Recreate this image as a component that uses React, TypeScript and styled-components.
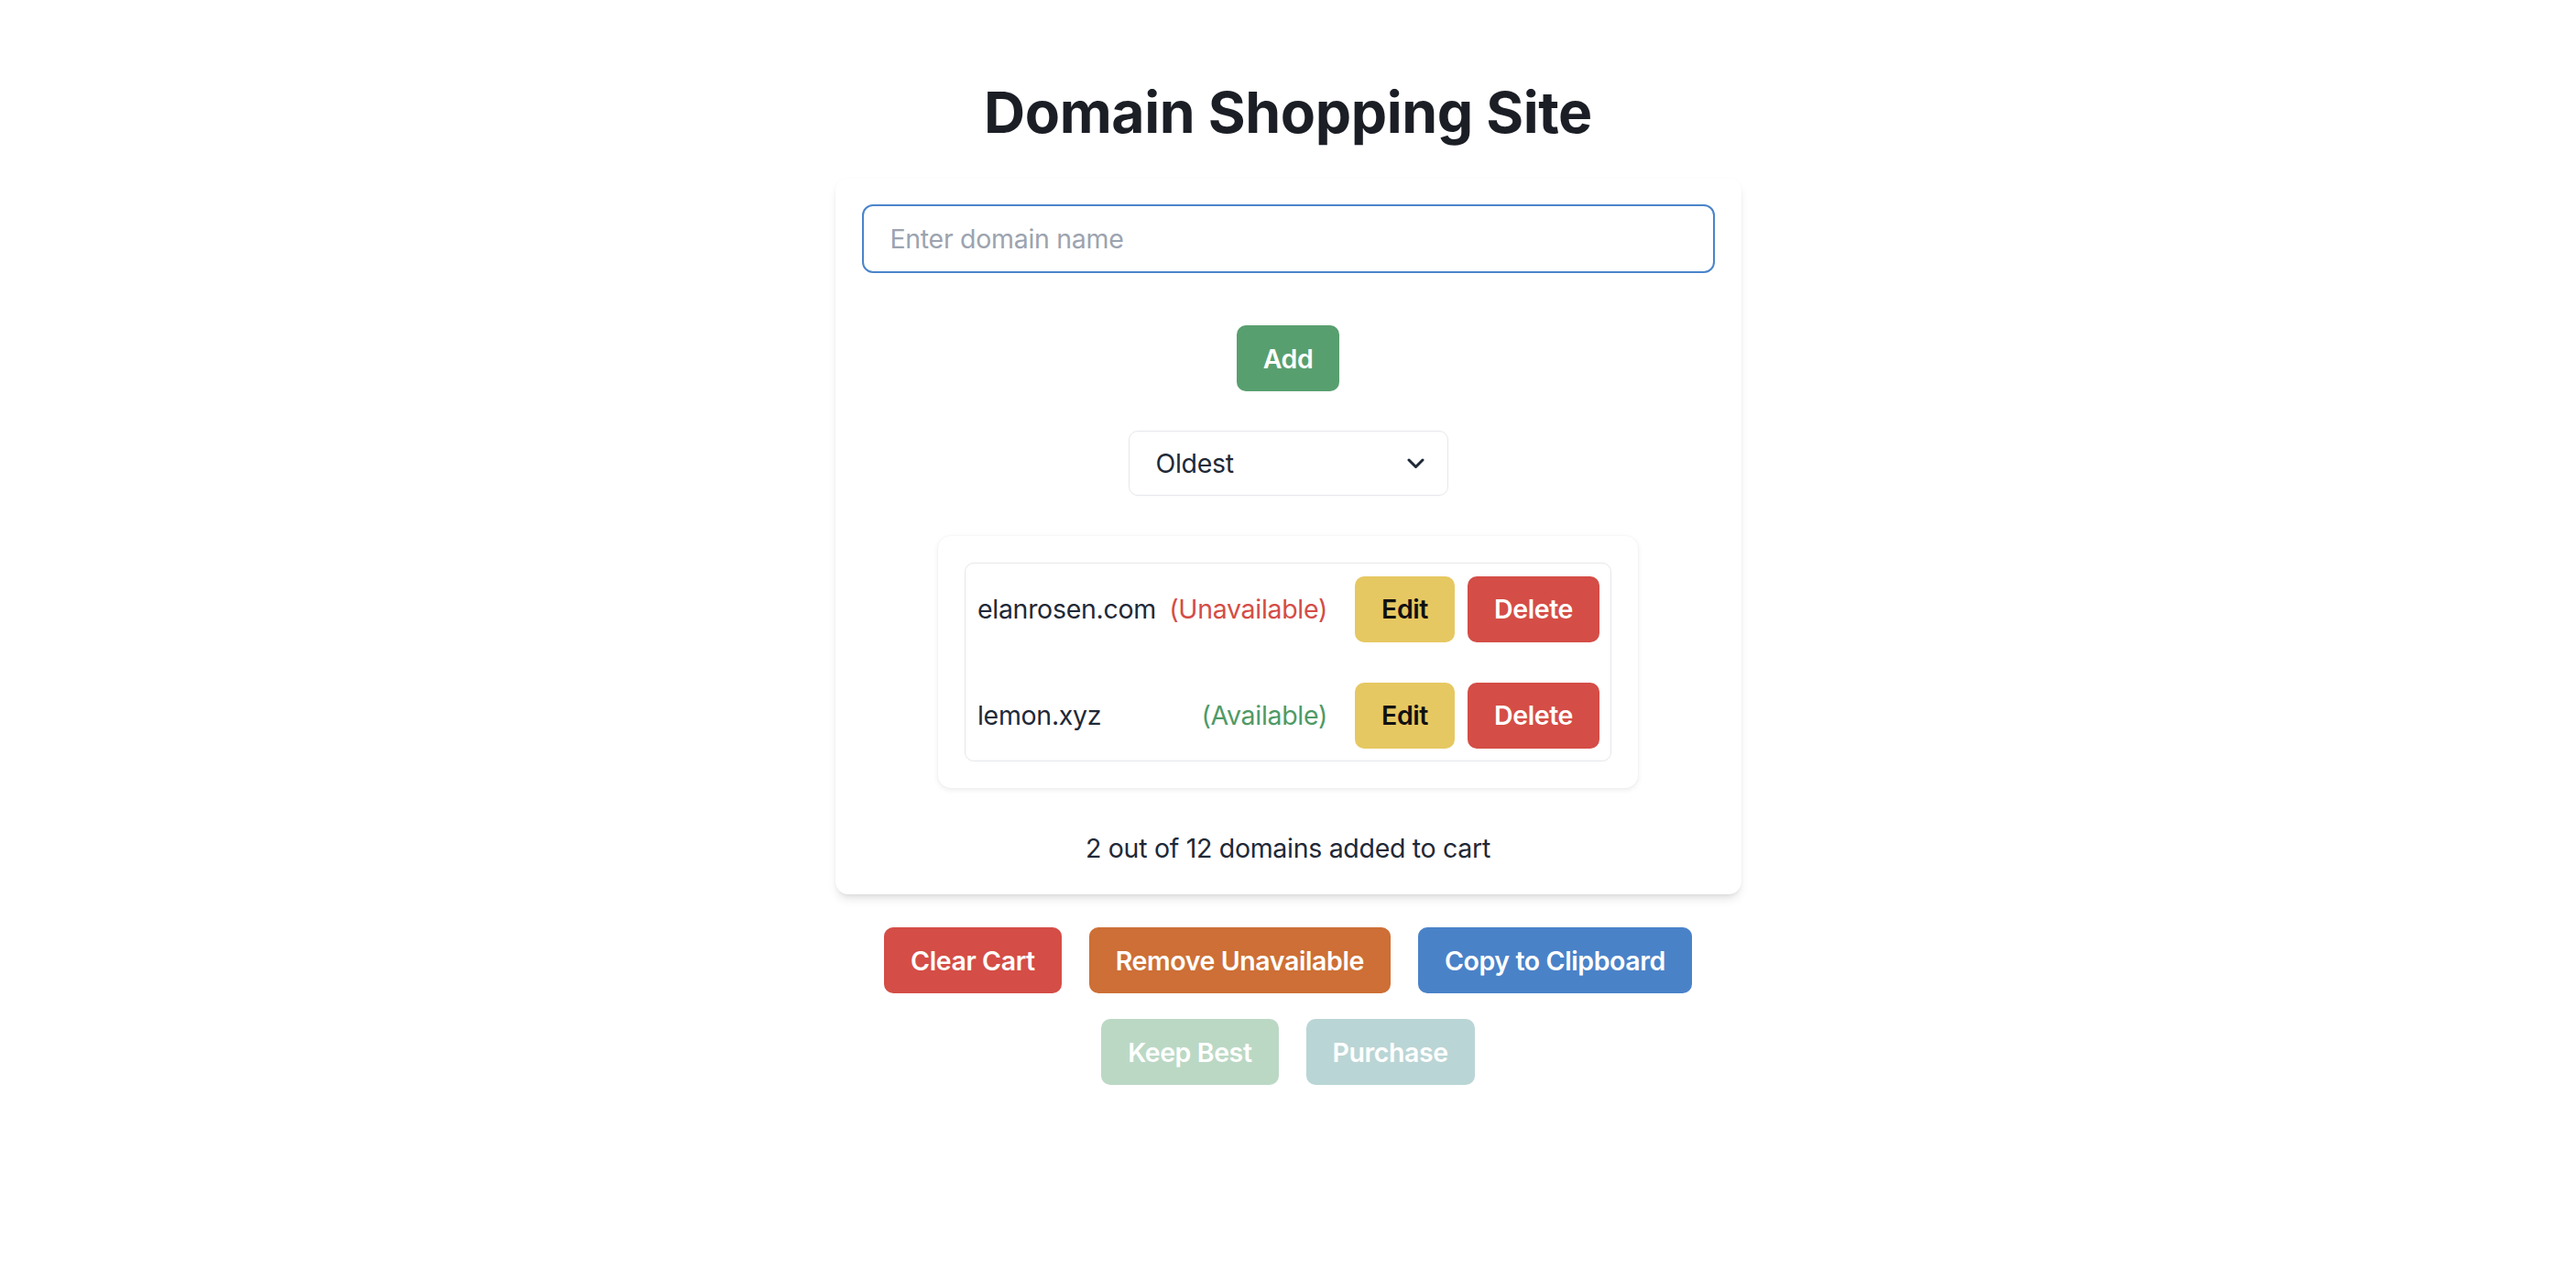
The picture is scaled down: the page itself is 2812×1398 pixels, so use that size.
import React, { useState } from "react";
import styled, { createGlobalStyle, css } from "styled-components";

const GlobalStyle = createGlobalStyle`
  html, body {
    margin: 0;
    padding: 0;
    background: #ffffff;
    font-family: Inter, "Noto Sans", "Liberation Sans", sans-serif;
    color: #1f2937;
  }
  * { box-sizing: border-box; }
`;

const Page = styled.main`
  display: flex;
  flex-direction: column;
  align-items: center;
  padding-top: 86px;
  padding-bottom: 80px;
`;

const Title = styled.h1`
  margin: 0 0 36px;
  font-size: 62.5px;
  line-height: 72px;
  font-weight: 700;
  color: #1b1e25;
  letter-spacing: -0.4px;
`;

const Card = styled.section`
  width: 989px;
  padding: 29px;
  background: #ffffff;
  border-radius: 14px;
  box-shadow: 0 7px 11px -2px rgba(0, 0, 0, 0.1), 0 4px 7px -4px rgba(0, 0, 0, 0.1),
    0 0 2px rgba(0, 0, 0, 0.04);
  display: flex;
  flex-direction: column;
  align-items: center;
`;

const DomainInput = styled.input`
  width: 100%;
  height: 75px;
  border: 2.5px solid #4a84ca;
  border-radius: 12px;
  padding: 0 29px;
  font-family: inherit;
  font-size: 28.5px;
  letter-spacing: -0.3px;
  color: #1f2937;
  outline: none;
  background: #fff;
  &::placeholder {
    color: #9ca3af;
  }
`;

type Tone = "green" | "yellow" | "red" | "orange" | "blue" | "teal";

const toneColors: Record<Tone, { bg: string; fg: string }> = {
  green: { bg: "#589f6f", fg: "#ffffff" },
  yellow: { bg: "#e6c862", fg: "#111111" },
  red: { bg: "#d44d46", fg: "#ffffff" },
  orange: { bg: "#cd6f36", fg: "#ffffff" },
  blue: { bg: "#4a82c8", fg: "#ffffff" },
  teal: { bg: "#559898", fg: "#ffffff" },
};

const Button = styled.button<{ $tone: Tone; $faded?: boolean }>`
  flex-shrink: 0;
  height: 72px;
  padding: 0 29px;
  border: none;
  border-radius: 10px;
  font-family: inherit;
  font-size: 28.5px;
  font-weight: 600;
  letter-spacing: -0.4px;
  line-height: 43px;
  cursor: pointer;
  white-space: nowrap;
  ${({ $tone }) => css`
    background: ${toneColors[$tone].bg};
    color: ${toneColors[$tone].fg};
  `}
  ${({ $faded }) =>
    $faded &&
    css`
      opacity: 0.4;
      cursor: not-allowed;
    `}
`;

const AddButton = styled(Button)`
  margin-top: 57px;
`;

const SelectWrap = styled.div`
  position: relative;
  margin-top: 43px;
  width: 349px;
  height: 71px;
`;

const SortSelect = styled.select`
  appearance: none;
  -webkit-appearance: none;
  width: 100%;
  height: 100%;
  border: 1.8px solid #e5e7eb;
  border-radius: 10px;
  background: #ffffff;
  padding: 0 60px 0 29px;
  font-family: inherit;
  font-size: 28.5px;
  letter-spacing: -0.3px;
  color: #1f2937;
  outline: none;
`;

const Chevron = styled.svg`
  position: absolute;
  right: 26px;
  top: 50%;
  width: 19px;
  height: 12px;
  transform: translateY(-50%);
  pointer-events: none;
`;

const ListCard = styled.div`
  margin-top: 44px;
  width: 764px;
  padding: 29px;
  border-radius: 14px;
  background: #fff;
  box-shadow: 0 2px 6px rgba(0, 0, 0, 0.08), 0 0 2px rgba(0, 0, 0, 0.05);
`;

const DomainList = styled.ul`
  list-style: none;
  margin: 0;
  padding: 0;
  border: 1.8px solid #e5e7eb;
  border-radius: 10px;
  display: flex;
  flex-direction: column;
  gap: 17px;
`;

const DomainRow = styled.li`
  display: flex;
  align-items: center;
  padding: 13.5px 12px 13.5px 13px;
`;

const DomainName = styled.span`
  flex: 1 1 0;
  min-width: 0;
  white-space: nowrap;
  font-size: 28.5px;
  letter-spacing: -0.3px;
  color: #1f2937;
`;

const Status = styled.span<{ $available: boolean }>`
  flex-shrink: 0;
  margin: 0 30px 0 16px;
  font-size: 28.5px;
  letter-spacing: -0.3px;
  white-space: nowrap;
  color: ${({ $available }) => ($available ? "#4f9a66" : "#d44d46")};
`;

const RowActions = styled.div`
  flex-shrink: 0;
  display: flex;
  gap: 14px;
`;

const Summary = styled.p`
  margin: 44px 0 0;
  font-size: 28.5px;
  letter-spacing: -0.3px;
  line-height: 43px;
  color: #1f2937;
`;

const ActionBar = styled.div`
  margin-top: 36px;
  width: 989px;
  display: flex;
  flex-wrap: wrap;
  justify-content: center;
  row-gap: 28px;
  column-gap: 30px;
`;

type Domain = { name: string; available: boolean };

export default function App() {
  const [value, setValue] = useState("");
  const [sort, setSort] = useState("oldest");
  const domains: Domain[] = [
    { name: "elanrosen.com", available: false },
    { name: "lemon.xyz", available: true },
  ];

  return (
    <>
      <GlobalStyle />
      <Page>
        <Title>Domain Shopping Site</Title>
        <Card>
          <DomainInput
            autoFocus
            placeholder="Enter domain name"
            value={value}
            onChange={(e) => setValue(e.target.value)}
          />
          <AddButton $tone="green">Add</AddButton>
          <SelectWrap>
            <SortSelect value={sort} onChange={(e) => setSort(e.target.value)}>
              <option value="oldest">Oldest</option>
              <option value="newest">Newest</option>
              <option value="az">A-Z</option>
            </SortSelect>
            <Chevron viewBox="0 0 19 12" fill="none">
              <path
                d="M2 2 L9.5 9.5 L17 2"
                stroke="#1f2937"
                strokeWidth="3"
                strokeLinecap="round"
                strokeLinejoin="round"
              />
            </Chevron>
          </SelectWrap>
          <ListCard>
            <DomainList>
              {domains.map((d) => (
                <DomainRow key={d.name}>
                  <DomainName>{d.name}</DomainName>
                  <Status $available={d.available}>
                    {d.available ? "(Available)" : "(Unavailable)"}
                  </Status>
                  <RowActions>
                    <Button $tone="yellow">Edit</Button>
                    <Button $tone="red">Delete</Button>
                  </RowActions>
                </DomainRow>
              ))}
            </DomainList>
          </ListCard>
          <Summary>2 out of 12 domains added to cart</Summary>
        </Card>
        <ActionBar>
          <Button $tone="red">Clear Cart</Button>
          <Button $tone="orange">Remove Unavailable</Button>
          <Button $tone="blue">Copy to Clipboard</Button>
          <Button $tone="green" $faded disabled>
            Keep Best
          </Button>
          <Button $tone="teal" $faded disabled>
            Purchase
          </Button>
        </ActionBar>
      </Page>
    </>
  );
}
